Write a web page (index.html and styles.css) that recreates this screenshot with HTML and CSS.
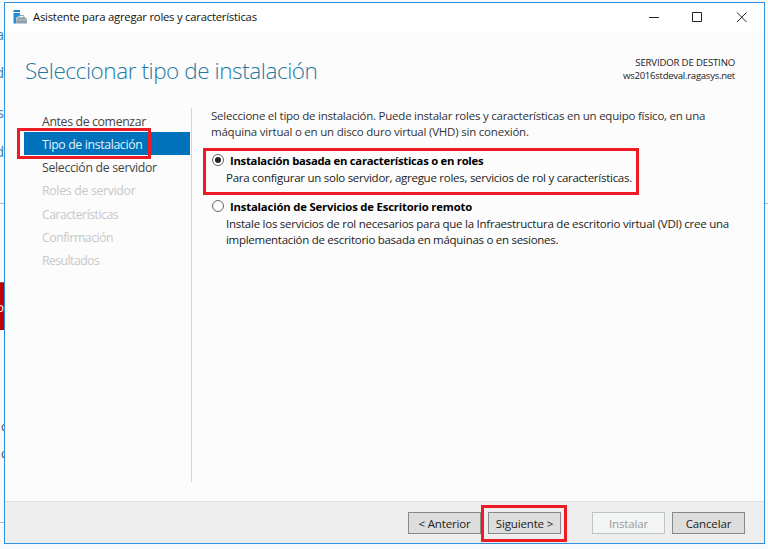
FILE: index.html
```html
<!DOCTYPE html>
<html lang="es">
<head>
<meta charset="utf-8">
<title>Asistente para agregar roles y características</title>
<link rel="stylesheet" href="styles.css">
</head>
<body>
<div class="backdrop">
  <span class="peek peek-1">a</span>
  <span class="peek peek-2">d</span>
  <span class="peek peek-3">s</span>
  <span class="peek peek-4">d</span>
  <i class="rule rule-1"></i>
  <i class="tile">o</i>
  <span class="peek peek-5">c</span>
  <span class="peek peek-6">c</span>
  <i class="rule rule-2"></i>
</div>
<main class="window">
  <header class="titlebar">
    <svg class="app-icon" width="14" height="14" viewBox="0 0 14 14">
      <path d="M.5 0h6.500v2H.5z" fill="#1b83c9"/>
      <path d="M.5 3h6.500v2L3 8v5.500H.5z" fill="#1b8fdc"/>
      <path d="M6 7.500V6.200q0-.8.8-.8h3.200q.8 0 .8.800v1.300" fill="none" stroke="#8795a1" stroke-width="1"/>
      <path d="M4.600 7.200h7.600L14 9.200v4.300H3.200V9.200z" fill="#8c9dab"/>
      <path d="M3.200 9.900H14" stroke="#c6d0d8" stroke-width=".8"/>
    </svg>
    <span class="caption">Asistente para agregar roles y características</span>
    <svg class="controls" width="100" height="12" viewBox="0 0 100 12" fill="none" stroke="#222" stroke-width="1">
      <path d="M1 6.500h10"/>
      <path d="M44.500 1.500h9v9h-9z"/>
      <path d="M89 1.500l9.500 9.500M98.500 1.500L89 11"/>
    </svg>
  </header>
  <section class="heading">
    <h1>Seleccionar tipo de instalación</h1>
    <div class="target"><div class="target-label">SERVIDOR DE DESTINO</div><div class="target-name">ws2016stdeval.ragasys.net</div></div>
  </section>
  <section class="body">
    <nav>
      <a class="n1">Antes de comenzar</a>
      <a class="n2 active">Tipo de instalación</a>
      <a class="n3">Selección de servidor</a>
      <a class="n4 off">Roles de servidor</a>
      <a class="n5 off">Características</a>
      <a class="n6 off">Confirmación</a>
      <a class="n7 off">Resultados</a>
    </nav>
    <div class="content">
      <p class="intro"><span class="l1">Seleccione el tipo de instalación. Puede instalar roles y características en un equipo físico, en una</span><br><span class="l2">máquina virtual o en un disco duro virtual (VHD) sin conexión.</span></p>
      <div class="option">
        <i class="radio checked"></i>
        <div><b class="o1">Instalación basada en características o en roles</b></div>
        <p><span class="l3">Para configurar un solo servidor, agregue roles, servicios de rol y características.</span></p>
      </div>
      <div class="option second">
        <i class="radio"></i>
        <div><b class="o2">Instalación de Servicios de Escritorio remoto</b></div>
        <p><span class="l4">Instale los servicios de rol necesarios para que la Infraestructura de escritorio virtual (VDI) cree una</span><br><span class="l5">implementación de escritorio basada en máquinas o en sesiones.</span></p>
      </div>
    </div>
  </section>
  <footer>
    <button>&lt; Anterior</button>
    <button class="next">Siguiente &gt;</button>
    <button class="install" disabled>Instalar</button>
    <button class="cancel">Cancelar</button>
  </footer>
</main>
<i class="mark mark-nav"></i>
<i class="mark mark-option"></i>
<i class="mark mark-next"></i>
</body>
</html>
```
FILE: styles.css
```css
* { box-sizing: border-box; }
body { margin: 0; width: 768px; height: 549px; position: relative; overflow: hidden; background: #f8f9fa; font-family: "Open Sans", "Noto Sans", sans-serif; font-size: 11.5px; color: #333; }
.backdrop { position: absolute; inset: 0; }
.peek { position: absolute; width: 4px; overflow: hidden; direction: rtl; line-height: 20px; color: #3d7fb5; font-size: 14px; }
.peek-1 { top: 25px; } .peek-2 { top: 63px; } .peek-3 { top: 103px; } .peek-4 { top: 142px; }
.peek-5, .peek-6 { left: 1px; direction: ltr; color: #444; font-size: 12px; }
.peek-5 { top: 417px; } .peek-6 { top: 444px; }
.rule { position: absolute; left: 0; width: 100%; height: 1px; background: #b5b8bb; }
.rule-1 { top: 203px; } .rule-2 { top: 522px; width: 4px; }
.tile { position: absolute; top: 282px; left: 0; width: 4px; height: 48px; background: #c00000; border-top: 1px solid #90585a; color: #fff; font: 12px/50px "Open Sans", sans-serif; overflow: hidden; direction: rtl; }
.window { position: absolute; left: 4px; top: 2px; width: 761px; height: 542px; border: 1px solid #3090de; background: #fcfcfc; display: flex; flex-direction: column; }
.titlebar { height: 29px; background: #fff; display: flex; align-items: center; padding: 0 16px 0 8px; flex: none; }
.app-icon { margin-top: -1px; }
.caption { margin: -2px 0 0 6px; flex: 1; color: #111; font-size: 11.3px; white-space: nowrap; letter-spacing: -.23px; }
.controls { margin-top: -2px; }
.heading { height: 76px; flex: none; display: flex; justify-content: space-between; padding: 24px 29px 0 20px; }
h1 { margin: 0; font-size: 22.5px; font-weight: 300; line-height: 30px; color: #24799f; white-space: nowrap; letter-spacing: -.43px; }
.target { font-size: 9.6px; line-height: 13px; text-align: right; color: #222; white-space: nowrap; }
.target-label { letter-spacing: -.16px; }
.target-name { letter-spacing: -.29px; }
.body { flex: 1; display: flex; }
nav { margin-left: 19px; width: 168px; height: 374px; border-right: 1px solid #d5d5d5; display: flex; flex-direction: column; }
nav a { width: 166px; height: 23.3px; line-height: 25px; padding-left: 18px; font-size: 12.3px; color: #444; white-space: nowrap; letter-spacing: -.31px; }
nav a:first-child { margin-top: .5px; }
nav .active { background: #0072bc; color: #e5f1f9; letter-spacing: -.36px; }
nav .off { color: #c8c8c8; }
nav .n1 { letter-spacing: -.36px; }
nav .n5, nav .n6 { letter-spacing: -.5px; }
nav .n7 { letter-spacing: -.58px; }
.content { margin-left: 19px; flex: 1; white-space: nowrap; line-height: 15.5px; letter-spacing: -.25px; }
.l1 { letter-spacing: -.235px; } .l2 { letter-spacing: -.21px; } .l3 { letter-spacing: -.265px; } .l5 { letter-spacing: -.285px; }
p { margin: 0; }
.option { position: relative; padding-left: 19px; margin-top: 13px; color: #222; }
.option b { color: #000; font-size: 11.3px; line-height: 16px; position: relative; top: .5px; }
.o1 { letter-spacing: -.27px; } .o2 { letter-spacing: -.18px; }
.option p { margin: 2px 0 0 -4px; }
.option.second { margin-top: 12.5px; }
.radio { position: absolute; left: 1px; top: 2px; width: 12px; height: 12px; border: 1px solid #666; border-radius: 50%; background: #fff; }
.checked::after { content: ""; position: absolute; left: 2px; top: 2px; width: 6px; height: 6px; border-radius: 50%; background: #222; }
footer { height: 42px; background: #eee; border-top: 1px solid #e2e2e2; display: flex; padding: 10px 19px 0 0; justify-content: flex-end; }
button { width: 73px; height: 22px; padding: 0; border: 1px solid #888; background: #ddd; font: 11.5px "Open Sans", sans-serif; letter-spacing: -.15px; color: #222; white-space: nowrap; }
.next { margin-left: 7px; } .install { margin-left: 31px; } .cancel { margin-left: 7px; }
button:disabled { color: #999; background: #f4f5f5; border-color: #bfc4c6; }
.mark { position: absolute; border: 3px solid #ed1c24; }
.mark-nav { left: 17px; top: 128px; width: 134px; height: 31px; }
.mark-option { left: 203px; top: 148px; width: 436px; height: 47px; }
.mark-next { left: 481px; top: 505px; width: 86px; height: 37px; }
```
